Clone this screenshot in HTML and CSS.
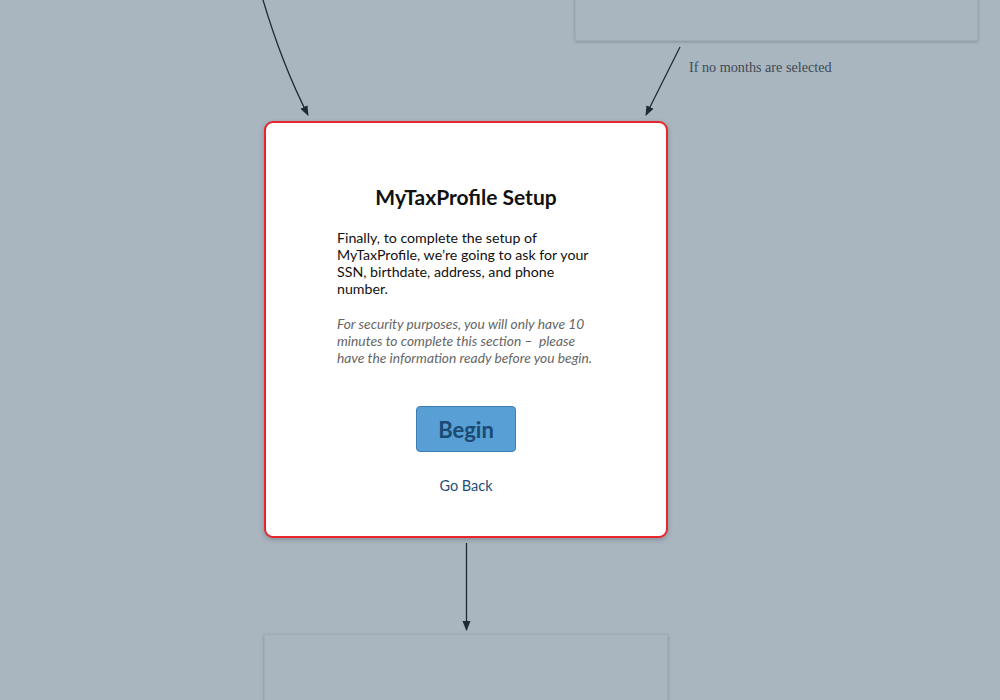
FILE: index.html
```html
<!DOCTYPE html>
<html>
<head>
<meta charset="utf-8">
<link rel="stylesheet" href="styles.css">
</head>
<body>
<div class="canvas">
  <div class="node node-top"></div>
  <div class="node node-bottom"></div>
  <svg class="edges" width="1000" height="700" viewBox="0 0 1000 700">
    <defs>
      <marker id="ah" markerWidth="10" markerHeight="10" refX="9" refY="5" orient="auto" markerUnits="userSpaceOnUse">
        <path d="M0,1 L10,5 L0,9 Z" fill="#1f2a33"/>
      </marker>
    </defs>
    <path d="M263,0 C275,40 290,80 308,115" fill="none" stroke="#1f2a33" stroke-width="1.3" marker-end="url(#ah)"/>
    <path d="M680,47 L646,115" fill="none" stroke="#1f2a33" stroke-width="1.3" marker-end="url(#ah)"/>
    <path d="M466.5,543 L466.5,630" fill="none" stroke="#1f2a33" stroke-width="1.3" marker-end="url(#ah)"/>
  </svg>
  <div class="edge-label">If no months are selected</div>
  <div class="node card">
    <h1 class="title">MyTaxProfile Setup</h1>
    <div class="content">
      <p class="lead">Finally, to complete the setup of MyTaxProfile, we’re going to ask for your SSN, birthdate, address, and phone number.</p>
      <p class="note">For security purposes, you will only have 10 minutes to complete this section –&nbsp; please have the information ready before you begin.</p>
    </div>
    <button class="btn-begin">Begin</button>
    <a class="go-back">Go Back</a>
  </div>
</div>
</body>
</html>
```
FILE: styles.css
```css
html, body {
  margin: 0;
  padding: 0;
  background: #a9b6bf;
}
.canvas {
  position: relative;
  width: 1000px;
  height: 700px;
  overflow: hidden;
  background: #a9b6bf;
}
.edges {
  position: absolute;
  left: 0;
  top: 0;
}
.node {
  position: absolute;
  box-sizing: border-box;
}
.node-top {
  left: 575px;
  top: -10px;
  width: 403px;
  height: 51px;
  border: 1px solid #9fadb6;
  box-shadow: 0 1px 3px rgba(60, 75, 90, 0.35);
}
.node-bottom {
  left: 264px;
  top: 634px;
  width: 404px;
  height: 100px;
  border: 1px solid #9fadb6;
  box-shadow: 0 1px 3px rgba(60, 75, 90, 0.35);
}
.edge-label {
  position: absolute;
  left: 689px;
  top: 59px;
  font-family: "Liberation Serif", "DejaVu Serif", serif;
  font-size: 14.2px;
  color: #3e4a54;
}
.card {
  left: 264px;
  top: 121px;
  width: 404px;
  height: 417px;
  background: #fff;
  border: 2px solid #e8252b;
  border-radius: 9px;
  box-shadow: 0 2px 5px rgba(50, 60, 70, 0.3);
  display: flex;
  flex-direction: column;
  align-items: center;
  padding-top: 61px;
  font-family: Lato, "Open Sans", sans-serif;
}
.title {
  margin: 0;
  font-size: 21px;
  font-weight: 700;
  color: #111;
  line-height: 26px;
}
.content {
  width: 258px;
  margin-top: 19px;
}
.lead {
  margin: 0;
  font-size: 14.2px;
  line-height: 17px;
  color: #111;
}
.note {
  margin: 18px 0 0;
  font-size: 13.8px;
  line-height: 17px;
  font-style: italic;
  font-weight: 400;
  color: #666;
}
.btn-begin {
  margin-top: 40px;
  width: 100px;
  height: 46px;
  background: #579fd5;
  border: 1px solid #3b7db5;
  border-radius: 4px;
  font-family: Lato, "Open Sans", sans-serif;
  font-size: 22px;
  font-weight: 700;
  color: #1b4a72;
  padding: 0;
}
.go-back {
  margin-top: 25px;
  font-size: 14.5px;
  color: #25507a;
}
```
